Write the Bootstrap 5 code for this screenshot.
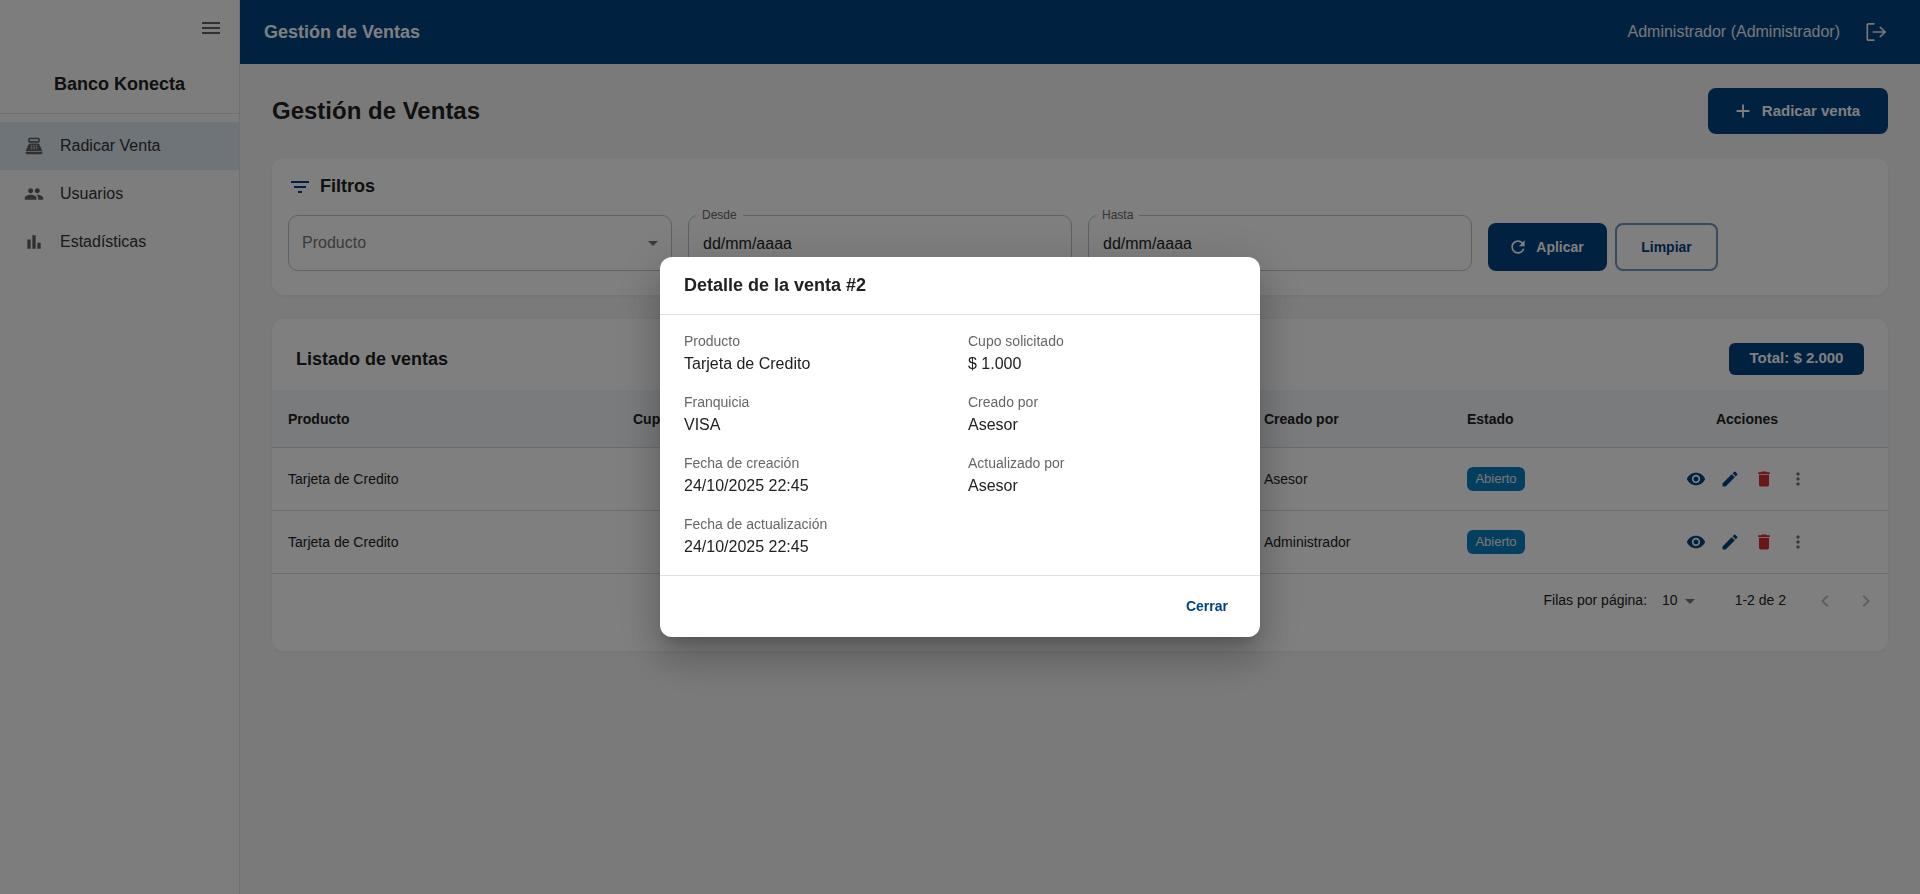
<!DOCTYPE html>
<html lang="es">
<head>
<meta charset="utf-8">
<title>Gestión de Ventas</title>
<link href="https://cdn.jsdelivr.net/npm/bootstrap@5.3.0/dist/css/bootstrap.min.css" rel="stylesheet">
<style>
html,body{height:100%}
body{font-family:"Liberation Sans",Arial,sans-serif;background:#f5f5f5;color:#212121;overflow:hidden}
svg{fill:currentColor;flex:none;display:block}
.app-shell{height:894px}
.side-rail{width:240px;flex:none;background:#fafafa;border-right:1px solid #e0e0e0}
.rail-top{height:56px;padding-right:16px;color:#616161}
.rail-brand{height:58px;font-size:18px;font-weight:700;border-bottom:1px solid #e0e0e0}
.rail-menu{padding-top:8px}
.rail-item{height:48px;padding-left:24px;gap:16px;font-size:16px;color:#333;text-decoration:none}
.rail-item svg{color:#616161}
.rail-item.is-on{background:#dee8f0}
.top-bar{height:64px;background:#004280;color:#fff;padding:0 34px 0 24px}
.top-title{font-size:18px;font-weight:700;color:#fff}
.top-user{font-size:16px;color:#eee;margin-right:26px}
.page-body{padding:24px 32px}
.page-title{font-size:24px;font-weight:700;margin:0}
.brand-btn{background:#004280;color:#fff;border:0;border-radius:8px;font-weight:700;font-size:14px}
.btn-new{height:46px;width:180px;font-size:15px;gap:8px;padding:0 4px 0 0}
.btn-apply{height:48px;width:119px;gap:8px;padding:0 3px 0 0}
.btn-clean{height:48px;width:103px;margin-left:8px;background:transparent;border:2px solid #6f94bd;border-radius:8px;color:#004280;font-weight:700;font-size:14px}
.soft-panel{background:#fff;border-radius:12px;box-shadow:0 1px 4px rgba(0,0,0,.06)}
.filter-panel{height:137px;margin-top:24px;padding:15px 16px 24px}
.filter-head{height:26px;font-size:18px;font-weight:700;gap:8px;margin-bottom:16px}
.filter-head svg{color:#004280;margin-top:1px}
.filter-row{gap:16px}
.field-box{position:relative;height:56px;width:384px;flex:none;border:1px solid #c2c2c2;border-radius:10px;padding:0 14px}
.field-select{color:#757575;font-size:16px;padding:0 6px 0 13px}
.field-select svg{color:#757575}
.field-tag{position:absolute;top:-8px;left:7px;background:#fff;padding:0 6px;font-size:12px;line-height:14px;color:#666}
.field-input{border:0;padding:2px 0 0;height:100%;width:100%;font-size:16px;color:#212121;background:transparent;box-shadow:none;border-radius:0}
.list-panel{margin-top:24px;height:332px;overflow:hidden}
.list-head{height:71px;padding:8px 24px 0}
.list-title{font-size:18px;font-weight:700;margin:0;padding-top:2px}
.total-chip{background:#004280;color:#fff;border-radius:6px;height:32px;width:135px;font-size:15px;font-weight:700}
.sales-grid{table-layout:fixed;width:100%;margin:0;font-size:14px;--bs-table-bg:transparent}
.sales-grid th{background:#f3f6f9;height:57px;padding:2px 16px 0;font-weight:700;vertical-align:middle;border-bottom:1px solid #d9d9d9;color:#212121}
.sales-grid td{height:63px;padding:0 16px;vertical-align:middle;border-bottom:1px solid #d9d9d9;color:#212121}
.sales-grid td.cell-text{padding-top:2px}
.state-chip{display:inline-flex;align-items:center;height:24px;width:58px;justify-content:center;border-radius:6px;background:#0a7fc0;color:#eee;font-size:13px;font-weight:400}
.action-set{gap:14px}
.tone-main{color:#004280}
.tone-red{color:#d32f2f}
.tone-mute{color:#757575}
.pager-row{height:54px;padding-right:10px;font-size:14px;color:#212121}
.pager-size{margin-left:15px}
.pager-count{margin-left:33px;margin-right:27px}
.pager-nav{gap:17px;color:#bdbdbd}
.modal-dialog.detail-dialog{max-width:600px}
.detail-card{border:0;border-radius:12px;height:380px;box-shadow:0 11px 15px -7px rgba(0,0,0,.2),0 24px 38px 3px rgba(0,0,0,.14),0 9px 46px 8px rgba(0,0,0,.12)}
.detail-top{height:58px;padding:0 24px;border-bottom:1px solid #e0e0e0}
.detail-title{font-size:18px;font-weight:700;margin:0}
.detail-main{padding:16px 24px;height:260px;flex:none;display:grid;grid-template-columns:1fr 1fr;gap:16px;align-content:start}
.detail-key{font-size:14px;line-height:21px;color:#666}
.detail-val{font-size:16px;line-height:24px;color:#212121}
.detail-foot{height:62px;padding:0 20px;border-top:1px solid #e0e0e0}
.close-link{color:#004280;font-size:14px;font-weight:700;background:none;border:0;padding:8px 12px}
</style>
</head>
<body>
<div class="app-shell d-flex">
  <aside class="side-rail d-flex flex-column">
    <div class="rail-top d-flex align-items-center justify-content-end">
      <svg width="24" height="24" viewBox="0 0 24 24"><path d="M3 18h18v-2H3v2zm0-5h18v-2H3v2zm0-7v2h18V6H3z"/></svg>
    </div>
    <div class="rail-brand d-flex align-items-center justify-content-center">Banco Konecta</div>
    <nav class="rail-menu d-flex flex-column">
      <a class="rail-item is-on d-flex align-items-center" href="#">
        <svg width="20" height="20" viewBox="0 0 24 24"><path d="M17 2H7c-1.1 0-2 .9-2 2v2c0 1.1.9 2 2 2h10c1.1 0 2-.9 2-2V4c0-1.1-.9-2-2-2zm0 4H7V4h10v2zm3 16H4c-1.1 0-2-.9-2-2v-1h20v1c0 1.1-.9 2-2 2zm-1.47-11.81C18.21 9.47 17.49 9 16.7 9H7.3c-.79 0-1.51.47-1.83 1.19L2 18h20l-3.47-7.81zM9.5 16h-1c-.28 0-.5-.22-.5-.5s.22-.5.5-.5h1c.28 0 .5.22.5.5s-.22.5-.5.5zm0-2h-1c-.28 0-.5-.22-.5-.5s.22-.5.5-.5h1c.28 0 .5.22.5.5s-.22.5-.5.5zm0-2h-1c-.28 0-.5-.22-.5-.5s.22-.5.5-.5h1c.28 0 .5.22.5.5s-.22.5-.5.5zm3 4h-1c-.28 0-.5-.22-.5-.5s.22-.5.5-.5h1c.28 0 .5.22.5.5s-.22.5-.5.5zm0-2h-1c-.28 0-.5-.22-.5-.5s.22-.5.5-.5h1c.28 0 .5.22.5.5s-.22.5-.5.5zm0-2h-1c-.28 0-.5-.22-.5-.5s.22-.5.5-.5h1c.28 0 .5.22.5.5s-.22.5-.5.5zm3 4h-1c-.28 0-.5-.22-.5-.5s.22-.5.5-.5h1c.28 0 .5.22.5.5s-.22.5-.5.5zm0-2h-1c-.28 0-.5-.22-.5-.5s.22-.5.5-.5h1c.28 0 .5.22.5.5s-.22.5-.5.5zm0-2h-1c-.28 0-.5-.22-.5-.5s.22-.5.5-.5h1c.28 0 .5.22.5.5s-.22.5-.5.5z"/></svg>
        Radicar Venta
      </a>
      <a class="rail-item d-flex align-items-center" href="#">
        <svg width="20" height="20" viewBox="0 0 24 24"><path d="M16 11c1.66 0 2.99-1.34 2.99-3S17.66 5 16 5c-1.66 0-3 1.34-3 3s1.34 3 3 3zm-8 0c1.66 0 2.99-1.34 2.99-3S9.66 5 8 5C6.34 5 5 6.34 5 8s1.34 3 3 3zm0 2c-2.33 0-7 1.17-7 3.5V19h14v-2.5c0-2.33-4.67-3.5-7-3.5zm8 0c-.29 0-.62.02-.97.05 1.16.84 1.97 1.97 1.97 3.45V19h6v-2.5c0-2.33-4.67-3.5-7-3.5z"/></svg>
        Usuarios
      </a>
      <a class="rail-item d-flex align-items-center" href="#">
        <svg width="20" height="20" viewBox="0 0 24 24"><path d="M4 9h4v11H4zm12 4h4v7h-4zm-6-9h4v16h-4z"/></svg>
        Estadísticas
      </a>
    </nav>
  </aside>

  <div class="flex-grow-1 d-flex flex-column">
    <header class="top-bar d-flex align-items-center justify-content-between">
      <div class="top-title">Gestión de Ventas</div>
      <div class="d-flex align-items-center">
        <span class="top-user">Administrador (Administrador)</span>
        <svg width="20" height="20" viewBox="0 0 20 20" style="fill:none" stroke="#eee" stroke-width="1.7"><path d="M8.5 1.8H2.3a1 1 0 0 0-1 1v14.4a1 1 0 0 0 1 1h6.2M6.5 10h12.5M14 5l5 5-5 5"/></svg>
      </div>
    </header>

    <main class="page-body">
      <div class="d-flex align-items-center justify-content-between">
        <h1 class="page-title">Gestión de Ventas</h1>
        <button class="brand-btn btn-new d-flex align-items-center justify-content-center">
          <svg width="22" height="22" viewBox="0 0 24 24"><path d="M19 13h-6v6h-2v-6H5v-2h6V5h2v6h6v2z"/></svg>
          Radicar venta
        </button>
      </div>

      <section class="soft-panel filter-panel">
        <div class="filter-head d-flex align-items-center">
          <svg width="24" height="24" viewBox="0 0 24 24"><path d="M10 18h4v-2h-4v2zM3 6v2h18V6H3zm3 7h12v-2H6v2z"/></svg>
          Filtros
        </div>
        <div class="filter-row d-flex align-items-end">
          <div class="field-box field-select d-flex align-items-center justify-content-between">
            <span>Producto</span>
            <svg width="24" height="24" viewBox="0 0 24 24"><path d="M7 10l5 5 5-5z"/></svg>
          </div>
          <div class="field-box">
            <label class="field-tag">Desde</label>
            <input class="form-control field-input" value="dd/mm/aaaa" readonly>
          </div>
          <div class="field-box">
            <label class="field-tag">Hasta</label>
            <input class="form-control field-input" value="dd/mm/aaaa" readonly>
          </div>
          <div class="d-flex">
            <button class="brand-btn btn-apply d-flex align-items-center justify-content-center">
              <svg width="20" height="20" viewBox="0 0 24 24"><path d="M17.65 6.35C16.2 4.9 14.21 4 12 4c-4.42 0-7.99 3.58-7.99 8s3.57 8 7.99 8c3.73 0 6.84-2.55 7.73-6h-2.08c-.82 2.33-3.04 4-5.65 4-3.31 0-6-2.69-6-6s2.69-6 6-6c1.66 0 3.14.69 4.22 1.78L13 11h7V4l-2.35 2.35z"/></svg>
              Aplicar
            </button>
            <button class="btn-clean">Limpiar</button>
          </div>
        </div>
      </section>

      <section class="soft-panel list-panel">
        <div class="list-head d-flex align-items-center justify-content-between">
          <h2 class="list-title">Listado de ventas</h2>
          <div class="total-chip d-flex align-items-center justify-content-center">Total: $ 2.000</div>
        </div>
        <table class="table sales-grid">
          <colgroup>
            <col style="width:345px"><col style="width:220px"><col style="width:200px"><col style="width:211px">
            <col style="width:203px"><col style="width:155px"><col style="width:282px">
          </colgroup>
          <thead>
            <tr><th>Producto</th><th>Cupo solicitado</th><th>Franquicia</th><th>Fecha de creación</th><th>Creado por</th><th>Estado</th><th class="text-center">Acciones</th></tr>
          </thead>
          <tbody>
            <tr>
              <td class="cell-text">Tarjeta de Credito</td><td class="cell-text text-end">$ 1.000</td><td class="cell-text">VISA</td><td class="cell-text">24/10/2025 22:45</td><td class="cell-text">Asesor</td>
              <td><span class="state-chip">Abierto</span></td>
              <td>
                <div class="action-set d-flex justify-content-center">
                  <svg class="tone-main" width="20" height="20" viewBox="0 0 24 24"><path d="M12 4.5C7 4.5 2.73 7.61 1 12c1.73 4.39 6 7.5 11 7.5s9.27-3.11 11-7.5c-1.73-4.39-6-7.5-11-7.5zM12 17c-2.76 0-5-2.24-5-5s2.24-5 5-5 5 2.24 5 5-2.24 5-5 5zm0-8c-1.66 0-3 1.34-3 3s1.34 3 3 3 3-1.34 3-3-1.34-3-3-3z"/></svg>
                  <svg class="tone-main" width="20" height="20" viewBox="0 0 24 24"><path d="M3 17.25V21h3.75L17.81 9.94l-3.75-3.75L3 17.25zM20.71 7.04c.39-.39.39-1.02 0-1.41l-2.34-2.34a.9959.9959 0 0 0-1.41 0l-1.83 1.83 3.75 3.75 1.83-1.83z"/></svg>
                  <svg class="tone-red" width="20" height="20" viewBox="0 0 24 24"><path d="M6 19c0 1.1.9 2 2 2h8c1.1 0 2-.9 2-2V7H6v12zM19 4h-3.5l-1-1h-5l-1 1H5v2h14V4z"/></svg>
                  <svg class="tone-mute" width="20" height="20" viewBox="0 0 24 24"><path d="M12 8c1.1 0 2-.9 2-2s-.9-2-2-2-2 .9-2 2 .9 2 2 2zm0 2c-1.1 0-2 .9-2 2s.9 2 2 2 2-.9 2-2-.9-2-2-2zm0 6c-1.1 0-2 .9-2 2s.9 2 2 2 2-.9 2-2-.9-2-2-2z"/></svg>
                </div>
              </td>
            </tr>
            <tr>
              <td class="cell-text">Tarjeta de Credito</td><td class="cell-text text-end">$ 1.000</td><td class="cell-text">VISA</td><td class="cell-text">24/10/2025 22:45</td><td class="cell-text">Administrador</td>
              <td><span class="state-chip">Abierto</span></td>
              <td>
                <div class="action-set d-flex justify-content-center">
                  <svg class="tone-main" width="20" height="20" viewBox="0 0 24 24"><path d="M12 4.5C7 4.5 2.73 7.61 1 12c1.73 4.39 6 7.5 11 7.5s9.27-3.11 11-7.5c-1.73-4.39-6-7.5-11-7.5zM12 17c-2.76 0-5-2.24-5-5s2.24-5 5-5 5 2.24 5 5-2.24 5-5 5zm0-8c-1.66 0-3 1.34-3 3s1.34 3 3 3 3-1.34 3-3-1.34-3-3-3z"/></svg>
                  <svg class="tone-main" width="20" height="20" viewBox="0 0 24 24"><path d="M3 17.25V21h3.75L17.81 9.94l-3.75-3.75L3 17.25zM20.71 7.04c.39-.39.39-1.02 0-1.41l-2.34-2.34a.9959.9959 0 0 0-1.41 0l-1.83 1.83 3.75 3.75 1.83-1.83z"/></svg>
                  <svg class="tone-red" width="20" height="20" viewBox="0 0 24 24"><path d="M6 19c0 1.1.9 2 2 2h8c1.1 0 2-.9 2-2V7H6v12zM19 4h-3.5l-1-1h-5l-1 1H5v2h14V4z"/></svg>
                  <svg class="tone-mute" width="20" height="20" viewBox="0 0 24 24"><path d="M12 8c1.1 0 2-.9 2-2s-.9-2-2-2-2 .9-2 2 .9 2 2 2zm0 2c-1.1 0-2 .9-2 2s.9 2 2 2 2-.9 2-2-.9-2-2-2zm0 6c-1.1 0-2 .9-2 2s.9 2 2 2 2-.9 2-2-.9-2-2-2z"/></svg>
                </div>
              </td>
            </tr>
          </tbody>
        </table>
        <div class="pager-row d-flex align-items-center justify-content-end">
          <span>Filas por página:</span>
          <span class="pager-size d-flex align-items-center">10<svg width="24" height="24" viewBox="0 0 24 24" class="tone-mute"><path d="M7 10l5 5 5-5z"/></svg></span>
          <span class="pager-count">1-2 de 2</span>
          <span class="pager-nav d-flex">
            <svg width="24" height="24" viewBox="0 0 24 24"><path d="M15.41 7.41 14 6l-6 6 6 6 1.41-1.41L10.83 12z"/></svg>
            <svg width="24" height="24" viewBox="0 0 24 24"><path d="M10 6 8.59 7.41 13.17 12l-4.58 4.59L10 18l6-6z"/></svg>
          </span>
        </div>
      </section>
    </main>
  </div>
</div>

<div class="modal-backdrop show"></div>
<div class="modal d-block" tabindex="-1">
  <div class="modal-dialog modal-dialog-centered detail-dialog">
    <div class="modal-content detail-card">
      <div class="detail-top d-flex align-items-center"><h5 class="detail-title">Detalle de la venta #2</h5></div>
      <div class="detail-main">
        <div><div class="detail-key">Producto</div><div class="detail-val">Tarjeta de Credito</div></div>
        <div><div class="detail-key">Cupo solicitado</div><div class="detail-val">$ 1.000</div></div>
        <div><div class="detail-key">Franquicia</div><div class="detail-val">VISA</div></div>
        <div><div class="detail-key">Creado por</div><div class="detail-val">Asesor</div></div>
        <div><div class="detail-key">Fecha de creación</div><div class="detail-val">24/10/2025 22:45</div></div>
        <div><div class="detail-key">Actualizado por</div><div class="detail-val">Asesor</div></div>
        <div><div class="detail-key">Fecha de actualización</div><div class="detail-val">24/10/2025 22:45</div></div>
      </div>
      <div class="detail-foot d-flex align-items-center justify-content-end"><button class="close-link">Cerrar</button></div>
    </div>
  </div>
</div>
<script src="https://cdn.jsdelivr.net/npm/bootstrap@5.3.0/dist/js/bootstrap.bundle.min.js"></script>
</body>
</html>
